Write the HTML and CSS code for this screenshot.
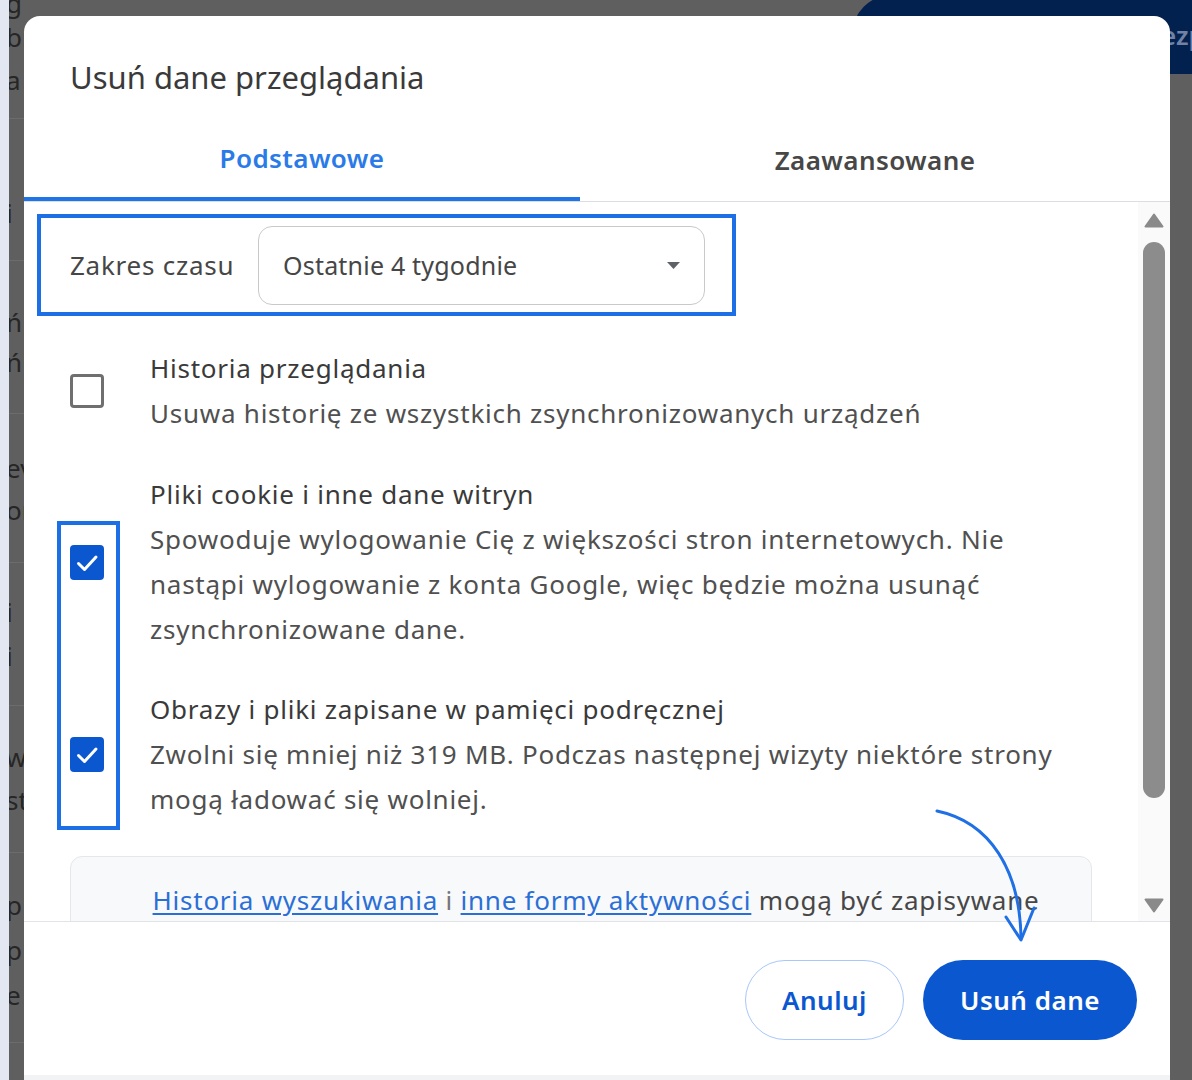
FILE: index.html
```html
<!DOCTYPE html>
<html lang="pl">
<head>
<meta charset="utf-8">
<title>Usuń dane przeglądania</title>
<link rel="stylesheet" href="styles.css">
</head>
<body>
<div class="page">
  <div class="strip"></div>
  <div class="behind">
    <div class="frag">g ;</div>
    <div class="frag">bi</div>
    <div class="frag">a</div>
    <div class="rule"></div>
    <div class="frag">i</div>
    <div class="rule"></div>
    <div class="frag">ń</div>
    <div class="frag">ń</div>
    <div class="rule"></div>
    <div class="frag">ev</div>
    <div class="frag">or</div>
    <div class="rule"></div>
    <div class="frag">i</div>
    <div class="frag">i</div>
    <div class="rule"></div>
    <div class="frag">w</div>
    <div class="frag">st</div>
    <div class="rule"></div>
    <div class="frag">p</div>
    <div class="frag">p</div>
    <div class="frag">e</div>
    <div class="rule"></div>
  </div>
  <div class="navy"><span class="navy-text">ezp</span></div>

  <section class="dialog">
    <header class="dlg-title">Usuń dane przeglądania</header>
    <nav class="tabs">
      <div class="tab active">Podstawowe</div>
      <div class="tab">Zaawansowane</div>
    </nav>

    <div class="body">
      <div class="scroll">
        <div class="range">
          <span class="range-label">Zakres czasu</span>
          <div class="select">
            <span>Ostatnie 4 tygodnie</span>
            <svg class="caret" width="13" height="7" viewBox="0 0 13 7"><path d="M0 0 H13 L6.5 7 Z" fill="#5f6368"/></svg>
          </div>
        </div>

        <div class="options">
          <div class="cb-mark"></div>

          <div class="opt">
            <span class="cb"></span>
            <div class="opt-text">
              <div class="opt-title">Historia przeglądania</div>
              <div class="opt-desc">Usuwa historię ze wszystkich zsynchronizowanych urządzeń</div>
            </div>
          </div>

          <div class="opt opt-2">
            <span class="cb checked">
              <svg width="34" height="35" viewBox="0 0 34 35"><path d="M8.5 18.5 L14.5 24.5 L26 12" fill="none" stroke="#fff" stroke-width="3" stroke-linecap="round" stroke-linejoin="round"/></svg>
            </span>
            <div class="opt-text">
              <div class="opt-title">Pliki cookie i inne dane witryn</div>
              <div class="opt-desc">Spowoduje wylogowanie Cię z większości stron internetowych. Nie<br>nastąpi wylogowanie z konta Google, więc będzie można usunąć<br>zsynchronizowane dane.</div>
            </div>
          </div>

          <div class="opt opt-3">
            <span class="cb checked">
              <svg width="34" height="35" viewBox="0 0 34 35"><path d="M8.5 18.5 L14.5 24.5 L26 12" fill="none" stroke="#fff" stroke-width="3" stroke-linecap="round" stroke-linejoin="round"/></svg>
            </span>
            <div class="opt-text">
              <div class="opt-title">Obrazy i pliki zapisane w pamięci podręcznej</div>
              <div class="opt-desc">Zwolni się mniej niż 319 MB. Podczas następnej wizyty niektóre strony<br>mogą ładować się wolniej.</div>
            </div>
          </div>
        </div>

        <div class="info">
          <a class="link" href="#">Historia wyszukiwania</a> <span class="muted">i</span> <a class="link" href="#">inne formy aktywności</a> mogą być zapisywane<br>na Twoim koncie Google, gdy jesteś zalogowany. Możesz je w każdej chwili usunąć.
        </div>
      </div>

      <div class="scrollbar">
        <svg class="sb-arrow" width="20" height="15" viewBox="0 0 20 15"><path d="M10 1.5 L18.5 13.5 H1.5 Z" fill="#8a8a8a" stroke="#8a8a8a" stroke-width="2" stroke-linejoin="round"/></svg>
        <div class="thumb"></div>
        <svg class="sb-arrow down" width="20" height="15" viewBox="0 0 20 15"><path d="M1.5 1.5 H18.5 L10 13.5 Z" fill="#8a8a8a" stroke="#8a8a8a" stroke-width="2" stroke-linejoin="round"/></svg>
      </div>
    </div>

    <footer class="actions">
      <button class="btn btn-outline" type="button">Anuluj</button>
      <button class="btn btn-primary" type="button">Usuń dane</button>
    </footer>
  </section>

  <div class="right"></div>

  <svg class="arrow" width="1192" height="1080" viewBox="0 0 1192 1080">
    <path d="M937 811 C 990 822, 1020 870, 1021 938" fill="none" stroke="#1f6fe5" stroke-width="3" stroke-linecap="round"/>
    <path d="M1006 917 L1021 940 L1034 908" fill="none" stroke="#1f6fe5" stroke-width="3" stroke-linecap="round" stroke-linejoin="round"/>
  </svg>
</div>
</body>
</html>
```

FILE: styles.css
```css
* { box-sizing: border-box; }

html, body {
  margin: 0;
  padding: 0;
}

body {
  width: 1192px;
  height: 1080px;
  overflow: hidden;
  background: #5f5f5f;
  font-family: "Noto Sans", "Open Sans", sans-serif;
}

.page {
  position: relative;
  display: flex;
  height: 1080px;
}

/* ---------- page behind the modal ---------- */
.strip {
  position: relative;
  z-index: 1;
  width: 9px;
  flex: none;
  background: #e3e7f1;
}

.behind {
  width: 15px;
  flex: none;
  overflow: hidden;
  display: flex;
  flex-direction: column;
  color: #262626;
  font-size: 26px;
}

.frag {
  flex: none;
  height: 30px;
  line-height: 30px;
  white-space: nowrap;
  margin-left: -3px;
}

.rule {
  flex: none;
  height: 1px;
  background: #6c6c6c;
}

.behind > :nth-child(1)  { margin-top: -12px; }
.behind > :nth-child(2)  { margin-top: 4px; }
.behind > :nth-child(3)  { margin-top: 13px; }
.behind > :nth-child(4)  { margin-top: 23px; }
.behind > :nth-child(5)  { margin-top: 79px; }
.behind > :nth-child(6)  { margin-top: 32px; }
.behind > :nth-child(7)  { margin-top: 46px; }
.behind > :nth-child(8)  { margin-top: 10px; }
.behind > :nth-child(9)  { margin-top: 36px; }
.behind > :nth-child(10) { margin-top: 39px; }
.behind > :nth-child(11) { margin-top: 12px; }
.behind > :nth-child(12) { margin-top: 37px; }
.behind > :nth-child(13) { margin-top: 34px; }
.behind > :nth-child(14) { margin-top: 14px; }
.behind > :nth-child(15) { margin-top: 34px; }
.behind > :nth-child(16) { margin-top: 36px; }
.behind > :nth-child(17) { margin-top: 13px; }
.behind > :nth-child(18) { margin-top: 37px; }
.behind > :nth-child(19) { margin-top: 37px; }
.behind > :nth-child(20) { margin-top: 15px; }
.behind > :nth-child(21) { margin-top: 15px; }
.behind > :nth-child(22) { margin-top: 32px; }

.navy {
  position: absolute;
  left: 852px;
  top: -5px;
  width: 360px;
  height: 79px;
  background: #03214f;
  border-radius: 40px 0 0 0;
  z-index: 0;
  display: flex;
  align-items: center;
}

.navy-text {
  margin-left: 309px;
  color: #7282a4;
  font-size: 26px;
  font-weight: 600;
}

.right {
  flex: 1;
}

/* ---------- dialog ---------- */
.dialog {
  position: relative;
  z-index: 1;
  flex: none;
  width: 1146px;
  height: 1064px;
  margin-top: 16px;
  background: #fff;
  border-radius: 16px 16px 0 0;
  border-bottom: 5px solid #f2f3f5;
  display: flex;
  flex-direction: column;
}

.dlg-title {
  flex: none;
  height: 100px;
  padding: 41px 0 0 46px;
  font-size: 31px;
  line-height: 40px;
  color: #3a3a3a;
}

.tabs {
  flex: none;
  display: flex;
  height: 86px;
  border-bottom: 1px solid #dcdde1;
}

.tab {
  display: flex;
  align-items: center;
  justify-content: center;
  padding-top: 2px;
  font-size: 26px;
  letter-spacing: 0.4px;
  font-weight: 600;
  color: #474747;
}

.tab.active {
  width: 556px;
  color: #2a7ae8;
  border-bottom: 4px solid #1f74e8;
}

.tab:last-child {
  flex: 1;
}

.body {
  flex: none;
  display: flex;
  height: 719px;
  overflow: hidden;
}

.scroll {
  flex: 1;
  overflow: hidden;
  padding: 12px 0 0 13px;
}

/* time range */
.range {
  display: flex;
  align-items: center;
  width: 699px;
  height: 102px;
  border: 4px solid #1d6fe6;
  padding-left: 29px;
}

.range-label {
  width: 188px;
  font-size: 26px;
  letter-spacing: 0.75px;
  color: #464646;
}

.select {
  width: 447px;
  height: 79px;
  border: 1px solid #c9c9c9;
  border-radius: 14px;
  display: flex;
  align-items: center;
  justify-content: space-between;
  padding: 0 24px;
  font-size: 25px;
  letter-spacing: 0.2px;
  color: #464646;
}

/* options */
.options {
  position: relative;
  margin-top: 30px;
}

.cb-mark {
  position: absolute;
  left: 20px;
  top: 175px;
  width: 63px;
  height: 309px;
  border: 4px solid #1d6fe6;
}

.opt {
  display: flex;
  align-items: center;
  padding-left: 33px;
}

.opt-2 { margin-top: 36px; }
.opt-3 { margin-top: 35px; }

.cb {
  flex: none;
  width: 34px;
  height: 34px;
  border: 3px solid #6f6f6f;
  border-radius: 4px;
  margin-right: 46px;
}

.cb.checked {
  height: 35px;
  border: none;
  background: #0b57d0;
  display: flex;
}

.opt-text {
  font-size: 26px;
  letter-spacing: 0.75px;
  line-height: 45px;
  white-space: nowrap;
}

.opt-title { color: #3a3a3a; }
.opt-desc { color: #505050; }

/* info box */
.info {
  margin: 34px 46px 0 33px;
  background: #f8f9fb;
  border: 1px solid #e6e7ea;
  border-radius: 12px;
  padding: 21px 0 0 30px;
  height: 140px;
  text-align: center;
  font-size: 26px;
  letter-spacing: 0.75px;
  line-height: 45px;
  color: #474747;
  white-space: nowrap;
  overflow: hidden;
}

.link {
  color: #2b6fd6;
  text-decoration: underline;
  text-underline-offset: 3px;
}

.muted { color: #777; }

/* scrollbar */
.scrollbar {
  flex: none;
  width: 32px;
  background: #fafafa;
  display: flex;
  flex-direction: column;
  align-items: center;
  padding-top: 11px;
}

.thumb {
  width: 22px;
  height: 556px;
  margin-top: 14px;
  border-radius: 11px;
  background: #8c8c8c;
}

.sb-arrow.down {
  margin-top: 100px;
}

/* footer */
.actions {
  flex: 1;
  border-top: 1px solid #e2e3e6;
  display: flex;
  justify-content: flex-end;
  align-items: flex-start;
  gap: 19px;
  padding: 38px 33px 0 0;
}

.btn {
  height: 80px;
  border-radius: 40px;
  font-family: inherit;
  font-size: 26px;
  letter-spacing: 0.5px;
  font-weight: 600;
  padding: 0;
  cursor: pointer;
}

.btn-outline {
  width: 159px;
  background: #fff;
  border: 1.5px solid #a8c7fa;
  color: #0b57d0;
}

.btn-primary {
  width: 214px;
  background: #0b57d0;
  border: none;
  color: #fff;
}

/* annotation arrow */
.arrow {
  position: absolute;
  left: 0;
  top: 0;
  z-index: 2;
  pointer-events: none;
}
```
